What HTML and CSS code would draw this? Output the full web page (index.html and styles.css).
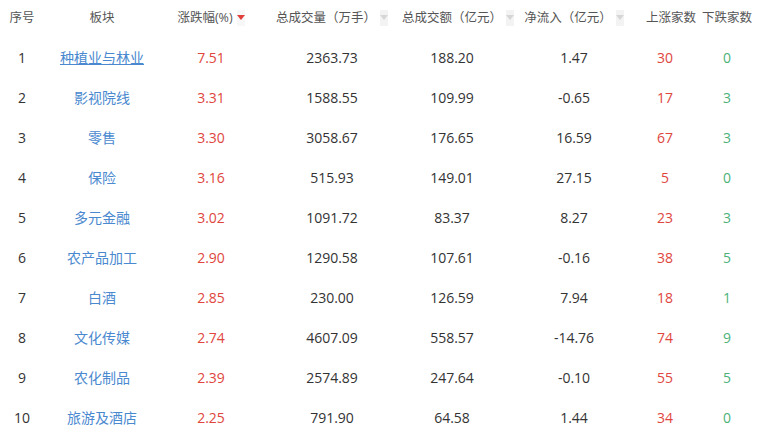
FILE: index.html
```html
<!DOCTYPE html>
<html lang="zh-CN">
<head>
  <meta charset="UTF-8">
  <title>板块涨幅榜</title>
<link rel="stylesheet" href="styles.css">
</head>
<body>
<table class="board-table">
  <colgroup>
    <col class="c-no"><col class="c-name"><col class="c-pct"><col class="c-vol">
    <col class="c-amt"><col class="c-flow"><col class="c-up"><col class="c-down">
  </colgroup>
  <thead>
    <tr>
      <th>序号</th>
      <th>板块</th>
      <th>涨跌幅(%)<span class="sort sort-active"></span></th>
      <th>总成交量（万手）<span class="sort"></span></th>
      <th>总成交额（亿元）<span class="sort"></span></th>
      <th>净流入（亿元）<span class="sort"></span></th>
      <th>上涨家数</th>
      <th>下跌家数</th>
    </tr>
  </thead>
  <tbody>
    <tr><td>1</td><td><a class="name hover">种植业与林业</a></td><td class="red">7.51</td><td>2363.73</td><td>188.20</td><td>1.47</td><td class="red">30</td><td class="green">0</td></tr>
    <tr><td>2</td><td><a class="name">影视院线</a></td><td class="red">3.31</td><td>1588.55</td><td>109.99</td><td>-0.65</td><td class="red">17</td><td class="green">3</td></tr>
    <tr><td>3</td><td><a class="name">零售</a></td><td class="red">3.30</td><td>3058.67</td><td>176.65</td><td>16.59</td><td class="red">67</td><td class="green">3</td></tr>
    <tr><td>4</td><td><a class="name">保险</a></td><td class="red">3.16</td><td>515.93</td><td>149.01</td><td>27.15</td><td class="red">5</td><td class="green">0</td></tr>
    <tr><td>5</td><td><a class="name">多元金融</a></td><td class="red">3.02</td><td>1091.72</td><td>83.37</td><td>8.27</td><td class="red">23</td><td class="green">3</td></tr>
    <tr><td>6</td><td><a class="name">农产品加工</a></td><td class="red">2.90</td><td>1290.58</td><td>107.61</td><td>-0.16</td><td class="red">38</td><td class="green">5</td></tr>
    <tr><td>7</td><td><a class="name">白酒</a></td><td class="red">2.85</td><td>230.00</td><td>126.59</td><td>7.94</td><td class="red">18</td><td class="green">1</td></tr>
    <tr><td>8</td><td><a class="name">文化传媒</a></td><td class="red">2.74</td><td>4607.09</td><td>558.57</td><td>-14.76</td><td class="red">74</td><td class="green">9</td></tr>
    <tr><td>9</td><td><a class="name">农化制品</a></td><td class="red">2.39</td><td>2574.89</td><td>247.64</td><td>-0.10</td><td class="red">55</td><td class="green">5</td></tr>
    <tr><td>10</td><td><a class="name">旅游及酒店</a></td><td class="red">2.25</td><td>791.90</td><td>64.58</td><td>1.44</td><td class="red">34</td><td class="green">0</td></tr>
  </tbody>
</table>
</body>
</html>
```

FILE: styles.css
```css
body {
  margin: 0;
  background: #fff;
  font-family: "Open Sans", "Noto Sans CJK SC", sans-serif;
  color: #333;
}

.board-table {
  width: 770px;
  table-layout: fixed;
  border-collapse: collapse;
}

/* column widths picked so the cell centres line up */
.c-no { width: 44px; }
.c-name { width: 116px; }
.c-pct { width: 102px; }
.c-vol { width: 140px; }
.c-amt { width: 100px; }
.c-flow { width: 144px; }
.c-up { width: 38px; }
.c-down { width: 86px; }

.board-table th,
.board-table td {
  padding: 0;
  text-align: center;
  white-space: nowrap;
}

.board-table th {
  height: 32px;
  padding-bottom: 5px;
  font-size: 12.5px;
  font-weight: normal;
  color: #555;
}

.board-table td {
  height: 40px;
  font-size: 14px;
}

/* small sort marker next to header */
.sort {
  display: inline-block;
  position: relative;
  width: 8px;
  height: 16px;
  margin-left: 4px;
  vertical-align: -4px;
  background: #f3f3f3;
}

.sort:after {
  position: absolute;
  content: "";
  top: 5px;
  left: 0;
  border: 4px solid transparent;
  border-top: 5px solid #d6d6d6;
}

.sort-active {
  background: #f7f7f7;
}

.sort-active:after {
  border-top-color: #e0403a;
}

.name {
  color: #4a89cf;
  cursor: pointer;
}

.name.hover {
  text-decoration: underline;
}

.red {
  color: #e0463e;
}

.green {
  color: #4cb27a;
}
```
